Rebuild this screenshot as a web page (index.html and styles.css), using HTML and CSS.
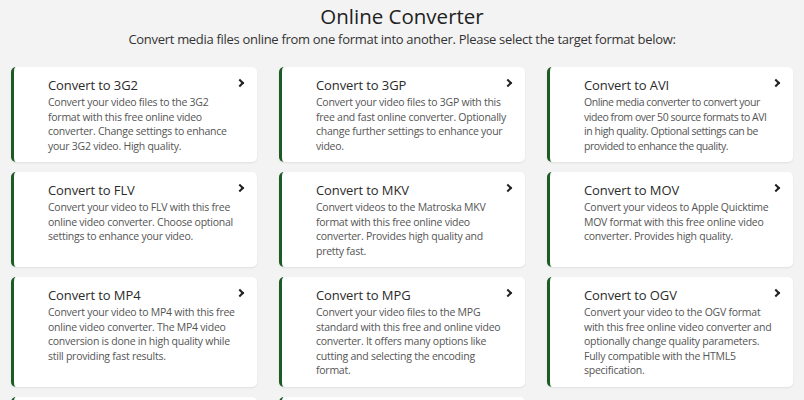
FILE: index.html
```html
<!DOCTYPE html>
<html lang="en">

<head>
  <meta charset="UTF-8">
  <meta name="viewport" content="width=device-width, initial-scale=1.0">
  <title>Online Converter</title>
  <link rel="stylesheet" href="styles.css">
</head>

<body>
  <div class="page">
    <div class="header">
      <h1>Online Converter</h1>
      <p>Convert media files online from one format into another. Please select the target format below:</p>
    </div>

    <div class="grid">
      <a class="card" href="#">
        <div class="title">Convert to 3G2</div>
        <div class="desc">Convert your video files to the 3G2 format with this free online video converter. Change settings to enhance your 3G2 video. High quality.</div>
        <span class="arrow"></span>
      </a>
      <a class="card" href="#">
        <div class="title">Convert to 3GP</div>
        <div class="desc">Convert your video files to 3GP with this free and fast online converter. Optionally change further settings to enhance your video.</div>
        <span class="arrow"></span>
      </a>
      <a class="card" href="#">
        <div class="title">Convert to AVI</div>
        <div class="desc tight">Online media converter to convert your video from over 50 source formats to AVI in high quality. Optional settings can be provided to enhance the quality.</div>
        <span class="arrow"></span>
      </a>
      <a class="card" href="#">
        <div class="title">Convert to FLV</div>
        <div class="desc">Convert your video to FLV with this free online video converter. Choose optional settings to enhance your video.</div>
        <span class="arrow"></span>
      </a>
      <a class="card" href="#">
        <div class="title">Convert to MKV</div>
        <div class="desc">Convert videos to the Matroska MKV format with this free online video converter. Provides high quality and pretty fast.</div>
        <span class="arrow"></span>
      </a>
      <a class="card" href="#">
        <div class="title">Convert to MOV</div>
        <div class="desc">Convert your videos to Apple Quicktime MOV format with this free online video converter. Provides high quality.</div>
        <span class="arrow"></span>
      </a>
      <a class="card" href="#">
        <div class="title">Convert to MP4</div>
        <div class="desc">Convert your video to MP4 with this free online video converter. The MP4 video conversion is done in high quality while still providing fast results.</div>
        <span class="arrow"></span>
      </a>
      <a class="card" href="#">
        <div class="title">Convert to MPG</div>
        <div class="desc">Convert your video files to the MPG standard with this free and online video converter. It offers many options like cutting and selecting the encoding format.</div>
        <span class="arrow"></span>
      </a>
      <a class="card" href="#">
        <div class="title">Convert to OGV</div>
        <div class="desc">Convert your video to the OGV format with this free online video converter and optionally change quality parameters. Fully compatible with the HTML5 specification.</div>
        <span class="arrow"></span>
      </a>
      <a class="card" href="#">
        <div class="title">Convert to WEBM</div>
        <div class="desc">Convert video files to the WebM format with this free online converter.</div>
        <span class="arrow"></span>
      </a>
      <a class="card" href="#">
        <div class="title">Convert to WMV</div>
        <div class="desc">Convert your video to the WMV format with this free online video converter.</div>
        <span class="arrow"></span>
      </a>
    </div>
  </div>
</body>

</html>
```

FILE: styles.css
```css
body {
  margin: 0;
  background-color: #f3f3f3;
  font-family: 'Open Sans', 'Noto Sans', Arial, sans-serif;
  color: #333;
}

.page {
  padding: 0 11px;
}

.header {
  text-align: center;
  padding-top: 3px;
}

.header h1 {
  margin: 0;
  font-size: 20.5px;
  font-weight: 400;
  line-height: 26px;
  color: #222;
}

.header p {
  margin: 0;
  font-size: 13px;
  letter-spacing: -0.3px;
  line-height: 20px;
  color: #333;
}

.grid {
  display: grid;
  grid-template-columns: repeat(3, 1fr);
  column-gap: 22px;
  row-gap: 10px;
  margin-top: 18px;
}

.card {
  position: relative;
  display: block;
  background-color: #fff;
  border-left: 3px solid #1d5b24;
  border-radius: 5px;
  box-shadow: 0 1px 2px rgba(0, 0, 0, 0.08);
  padding: 9px 19px 9px 34px;
  text-decoration: none;
  color: #333;
}

.card .title {
  font-size: 13px;
  letter-spacing: -0.1px;
  line-height: 19px;
  color: #2b2b2b;
}

.card .desc {
  font-size: 10.5px;
  letter-spacing: -0.25px;
  line-height: 14.5px;
  color: #555;
}

.card .desc.tight {
  letter-spacing: -0.45px;
}

.card .arrow {
  position: absolute;
  top: 13px;
  right: 14px;
  width: 4px;
  height: 4px;
  border-top: 2px solid #222;
  border-right: 2px solid #222;
  transform: rotate(45deg);
}
```
